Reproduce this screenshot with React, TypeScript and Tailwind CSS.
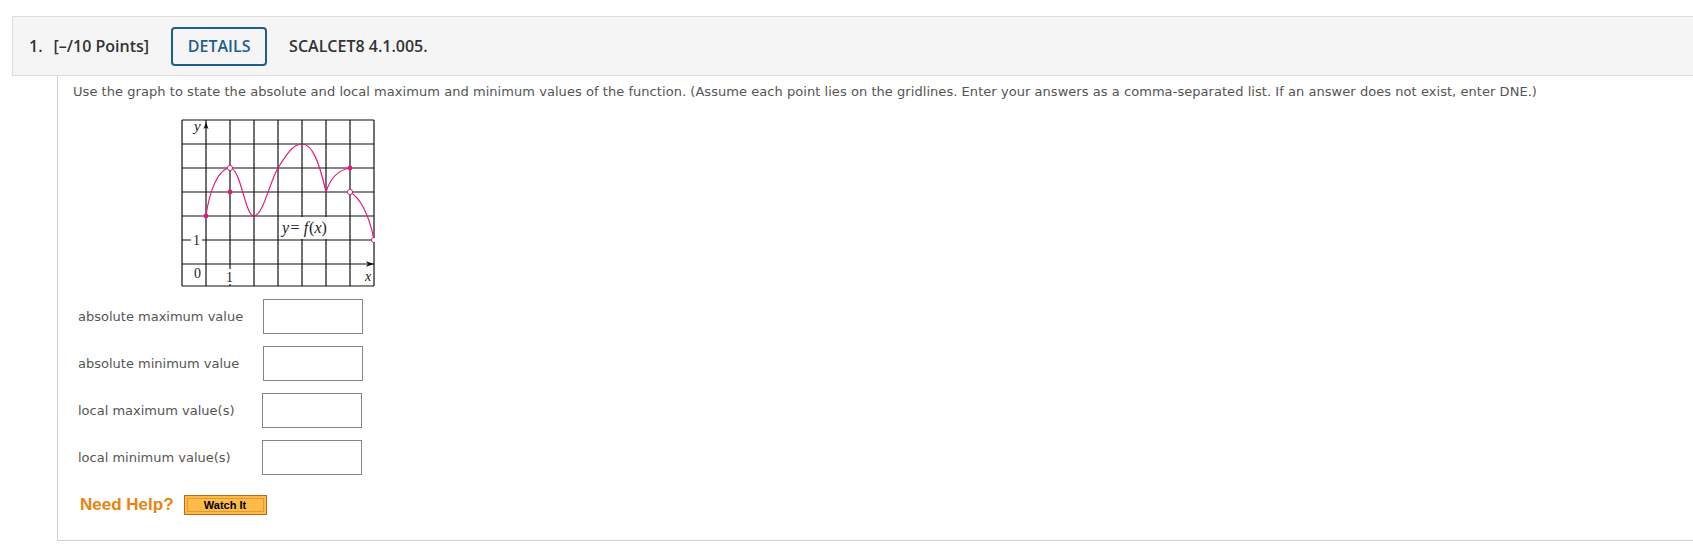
import React from 'react';

const PINK = '#e5197d';

const Graph: React.FC = () => {
  const cols = [1, 25, 49, 73, 97, 121, 145, 169, 193];
  const rows = [1, 25, 49, 73, 97, 121, 145, 167];
  return (
    <svg width="194" height="168" viewBox="0 0 194 168" className="block">
      <rect x="0" y="0" width="194" height="168" fill="#fff" />
      {cols.map((x) => (
        <line key={'c' + x} x1={x} y1={1} x2={x} y2={167} stroke="#111" strokeWidth="1.2" />
      ))}
      {rows.map((y) => (
        <line key={'r' + y} x1={1} y1={y} x2={193} y2={y} stroke="#111" strokeWidth="1.2" />
      ))}
      {/* label backgrounds */}
      <rect x="99" y="98" width="57" height="22" fill="#fff" />
      <rect x="10" y="114" width="11" height="14" fill="#fff" />
      <rect x="43" y="150" width="12" height="15" fill="#fff" />
      <rect x="182" y="150" width="10" height="15" fill="#fff" />
      <rect x="12" y="2" width="10" height="13" fill="#fff" />
      {/* axis arrows */}
      <path d="M25 3 L22.5 10 L25 8.5 L27.5 10 Z" fill="#111" />
      <path d="M193 145 L185 142.3 L187 145 L185 147.7 Z" fill="#111" />
      {/* curve */}
      <path
        d="M25 97 C28 74 37 49 49 49 C60 49 64 97 73 97 C82 97 89 62 97 49 C105 36 112 25 121 25 C131 25 138 42 145 73 C149 60 157 51 169 49"
        fill="none"
        stroke={PINK}
        strokeWidth="1.2"
      />
      <path d="M169 73 C178 78 188 94 193 121" fill="none" stroke={PINK} strokeWidth="1.2" />
      <circle cx="25" cy="97" r="2.4" fill={PINK} />
      <circle cx="49" cy="73" r="2.4" fill={PINK} />
      <circle cx="169" cy="49" r="2.4" fill={PINK} />
      <circle cx="49" cy="49" r="2.6" fill="#fff" stroke={PINK} strokeWidth="1" />
      <circle cx="169" cy="73" r="2.6" fill="#fff" stroke={PINK} strokeWidth="1" />
      <circle cx="193" cy="121" r="2.6" fill="#fff" stroke={PINK} strokeWidth="1" />
      {/* labels */}
      <g fontFamily="'Liberation Serif', serif" fill="#222" fontSize="15">
        <text x="13" y="12" fontStyle="italic">y</text>
        <text x="101" y="114" fontSize="16">
          <tspan fontStyle="italic">y</tspan>
          <tspan dx="1.5">=</tspan>
          <tspan dx="4" fontStyle="italic">f</tspan>
          <tspan dx="1">(</tspan>
          <tspan fontStyle="italic">x</tspan>
          <tspan>)</tspan>
        </text>
        <text x="12" y="126" fontSize="14">1</text>
        <text x="13" y="159" fontSize="14">0</text>
        <text x="45" y="163" fontSize="14">1</text>
        <text x="184" y="162" fontStyle="italic" fontSize="14">x</text>
      </g>
    </svg>
  );
};

const AnswerRow: React.FC<{ label: string; labelWidth: string }> = ({ label, labelWidth }) => (
  <div className="flex items-center h-[35px]">
    <span className={`${labelWidth} text-[13px] text-[#555]`}>{label}</span>
    <input
      type="text"
      className="w-[100px] h-[35px] border-[1.5px] border-[#858585] bg-white outline-none"
    />
  </div>
);

export default function App() {
  return (
    <div className="w-full h-[545px] bg-white overflow-hidden pt-4" style={{ fontFamily: "'Open Sans', 'Noto Sans', sans-serif" }}>
      <div className="ml-3 h-[60px] bg-[#f5f5f5] border border-r-0 border-[#dcdcdc] flex items-center pl-4 text-[16px] font-semibold text-[#333]">
        <span>1.</span>
        <span className="ml-[11px]">[–/10 Points]</span>
        <button className="ml-[22px] h-[39px] w-[96px] border-2 border-[#1f5e8c] rounded-[4px] text-[#1f5e8c] font-semibold text-[16px] bg-transparent">
          DETAILS
        </button>
        <span className="ml-[22px]">SCALCET8 4.1.005.</span>
      </div>
      <div className="ml-[57px] h-[465px] border-l border-b border-[#cfcfcf] pl-[15px]" style={{ fontFamily: "'DejaVu Sans', Verdana, sans-serif" }}>
        <p className="pt-[8px] text-[13px] text-[#555] leading-[16px] tracking-[0.05px]">
          Use the graph to state the absolute and local maximum and minimum values of the function. (Assume each point lies on the gridlines. Enter your answers as a comma-separated list. If an answer does not exist, enter DNE.)
        </p>
        <div className="mt-[19px] ml-[108px]">
          <Graph />
        </div>
        <div className="mt-[12px] ml-[5px] flex flex-col gap-[12px]">
          <AnswerRow label="absolute maximum value" labelWidth="w-[185px]" />
          <AnswerRow label="absolute minimum value" labelWidth="w-[185px]" />
          <AnswerRow label="local maximum value(s)" labelWidth="w-[184px]" />
          <AnswerRow label="local minimum value(s)" labelWidth="w-[184px]" />
        </div>
        <div className="mt-[17px] ml-[7px] flex items-center">
          <span className="text-[17px] font-bold text-[#e9830f]" style={{ fontFamily: "'Liberation Sans', Arial, sans-serif" }}>
            Need Help?
          </span>
          <button className="ml-[10px] w-[83px] h-[20px] border border-[#b86a1e] bg-[#ffb944] p-[2px]">
            <span
              className="flex items-center justify-center w-full h-full border border-[#e09a3c] bg-[#ffbb48] text-[11px] font-bold text-black"
              style={{ fontFamily: "'Liberation Sans', Arial, sans-serif" }}
            >
              Watch It
            </span>
          </button>
        </div>
      </div>
    </div>
  );
}
